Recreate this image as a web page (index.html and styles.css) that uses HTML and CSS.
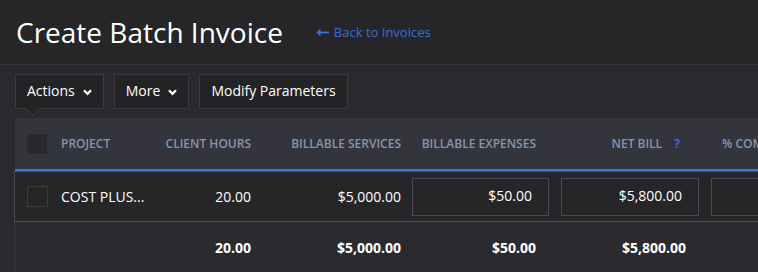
FILE: index.html
```html
<!DOCTYPE html>
<html lang="en">
<head>
    <meta charset="UTF-8">
    <title>Create Batch Invoice</title>
    <link rel="stylesheet" href="styles.css">
</head>
<body>
    <header class="page-header">
        <h1>Create Batch Invoice</h1>
        <a class="back-link" href="#"><svg class="arrow" width="13" height="9" viewBox="0 0 13 9"><path d="M4.5 0.5 L0.5 4.5 L4.5 8.5 Z" fill="#3a6fd6"/><rect x="2" y="3.6" width="11" height="1.8" fill="#3a6fd6"/></svg>Back to Invoices</a>
    </header>

    <div class="content">
        <div class="toolbar">
            <button class="tool-btn has-notch">Actions <span class="chev"><svg width="9" height="7" viewBox="0 0 9 7"><path d="M1 1.2 L4.5 4.8 L8 1.2" fill="none" stroke="#fff" stroke-width="2.2"/></svg></span></button>
            <button class="tool-btn">More <span class="chev"><svg width="9" height="7" viewBox="0 0 9 7"><path d="M1 1.2 L4.5 4.8 L8 1.2" fill="none" stroke="#fff" stroke-width="2.2"/></svg></span></button>
            <button class="tool-btn">Modify Parameters</button>
        </div>

        <div class="grid">
            <!-- header -->
            <div class="row head">
                <div class="cell c-check"><span class="box filled"></span></div>
                <div class="cell c-project">Project</div>
                <div class="cell c-num">Client Hours</div>
                <div class="cell c-num wide">Billable Services</div>
                <div class="cell c-inp">Billable Expenses</div>
                <div class="cell c-inp">Net Bill <span class="help">?</span></div>
                <div class="cell c-pct">% Complete</div>
            </div>

            <!-- project row -->
            <div class="row item">
                <div class="cell c-check"><span class="box"></span></div>
                <div class="cell c-project">COST PLUS...</div>
                <div class="cell c-num">20.00</div>
                <div class="cell c-num wide">$5,000.00</div>
                <div class="cell c-field"><input type="text" value="$50.00"></div>
                <div class="cell c-field"><input type="text" value="$5,800.00"></div>
                <div class="cell c-field"><input type="text" value=""></div>
            </div>

            <!-- totals -->
            <div class="row totals">
                <div class="cell c-check"></div>
                <div class="cell c-project"></div>
                <div class="cell c-num">20.00</div>
                <div class="cell c-num wide">$5,000.00</div>
                <div class="cell c-inp">$50.00</div>
                <div class="cell c-inp">$5,800.00</div>
                <div class="cell c-pct"></div>
            </div>
        </div>
    </div>
</body>
</html>
```

FILE: styles.css
```css
body {
    font-family: 'Open Sans', 'Liberation Sans', sans-serif;
    margin: 0;
    padding: 0;
    background-color: #29292e;
    color: #ffffff;
    overflow: hidden;
}
.page-header {
    display: flex;
    align-items: center;
    height: 64px;
    padding: 0 16px;
    background-color: #262629;
    border-bottom: 1px solid #36363b;
}
.page-header h1 {
    margin: 0;
    font-size: 28px;
    font-weight: 400;
    color: #ffffff;
}
.back-link {
    display: flex;
    align-items: center;
    margin-left: 33px;
    margin-top: 0;
    font-size: 13px;
    color: #3a6fd6;
    text-decoration: none;
}
.back-link .arrow {
    margin-right: 5px;
}
.content {
    padding: 9px 0 0 15px;
}
.toolbar {
    display: flex;
    gap: 10px;
}
.tool-btn {
    position: relative;
    height: 35px;
    padding: 0 11px 2px;
    background: #232326;
    border: 1px solid #3a3a40;
    color: #ffffff;
    font-family: inherit;
    font-size: 14px;
    display: flex;
    align-items: center;
}
.tool-btn .chev {
    display: inline-flex;
    margin-left: 8px;
    margin-top: 3px;
}
.has-notch::after {
    content: "";
    position: absolute;
    left: 12px;
    bottom: -6px;
    width: 9px;
    height: 9px;
    background: #232326;
    border-right: 1px solid #3a3a40;
    border-bottom: 1px solid #3a3a40;
    transform: rotate(45deg);
}
.grid {
    margin-top: 9px;
    width: 840px;
}
.row {
    display: grid;
    grid-template-columns: 35px 107px 105px 144px 149px 150px 150px;
    align-items: center;
}
.cell {
    font-size: 14px;
}
.head {
    height: 51px;
    background-color: #33343c;
    border-bottom: 2px solid #3a78d8;
}
.head .cell {
    font-size: 12px;
    font-weight: 600;
    text-transform: uppercase;
    color: #8894ad;
}
.c-check {
    padding-left: 12px;
}
.box {
    display: block;
    width: 19px;
    height: 19px;
    border: 1px solid #3a3a3f;
}
.box.filled {
    width: 20px;
    height: 20px;
    border: none;
    background: #28282b;
    margin-top: 1px;
}
.c-project {
    padding-left: 11px;
    white-space: nowrap;
}
.c-num {
    text-align: right;
    padding-right: 11px;
}
.c-num.wide {
    padding-right: 5px;
}
.c-inp {
    text-align: right;
    padding-right: 19px;
}
.help {
    color: #3a6fd6;
    font-weight: 700;
    margin-left: 9px;
    margin-right: 6px;
}
.c-pct {
    padding-left: 17px;
    white-space: nowrap;
}
.c-field {
    padding: 0 6px;
}
.c-field input {
    box-sizing: border-box;
    width: 100%;
    height: 38px;
    padding: 0 16px 2px;
    background: #262629;
    border: 1px solid #4a4a52;
    color: #ffffff;
    font-family: inherit;
    font-size: 14px;
    text-align: right;
}
.item {
    height: 49px;
    background-color: #262629;
    border: 1px solid #4c4c54;
    border-right: none;
    margin-left: -1px;
}
.totals {
    height: 50px;
    background-color: #2a2a2f;
    border-left: 1px solid #38383e;
    margin-left: -1px;
}
.totals .cell {
    font-weight: 700;
}
```
